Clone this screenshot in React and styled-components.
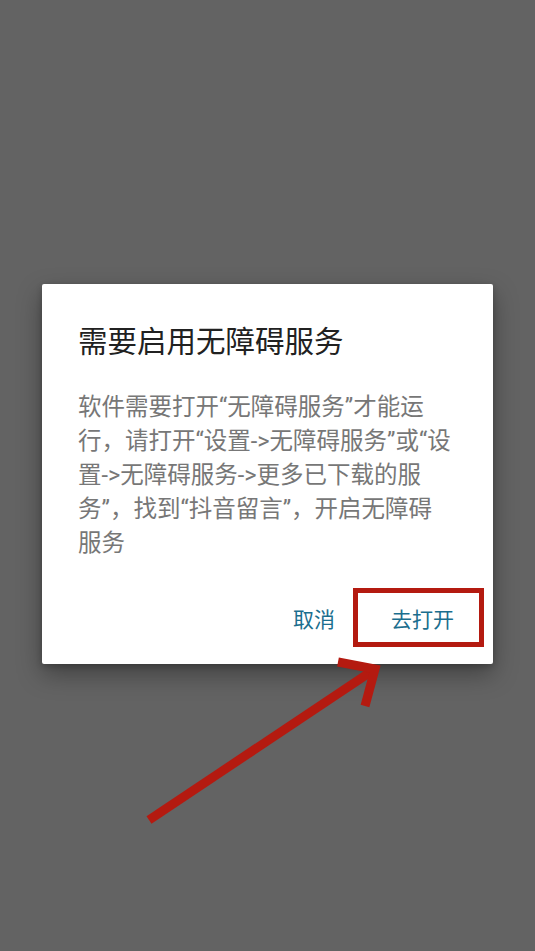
import React from "react";
import styled, { createGlobalStyle } from "styled-components";

const Global = createGlobalStyle`
  html, body { margin: 0; padding: 0; }
  body {
    background: #636363;
    font-family: Roboto, "Noto Sans CJK SC", sans-serif;
  }
`;

const Screen = styled.div`
  position: relative;
  width: 535px;
  height: 951px;
  background: #636363;
  overflow: hidden;
  padding-top: 284px;
  padding-left: 42px;
  box-sizing: border-box;
`;

const Dialog = styled.div`
  width: 451px;
  box-sizing: border-box;
  background: #ffffff;
  border-radius: 2px;
  box-shadow: 0 10px 24px rgba(0, 0, 0, 0.35), 0 2px 6px rgba(0, 0, 0, 0.2);
  padding: 40px 9px 17px 36px;
  display: flex;
  flex-direction: column;
`;

const Title = styled.h2`
  margin: 0;
  font-family: Roboto, "Noto Sans CJK SC", sans-serif;
  font-size: 29.5px;
  line-height: 36px;
  font-weight: 400;
  color: #212121;
`;

const Message = styled.p`
  margin: 30px 0 0 0;
  width: 376px;
  font-family: Roboto, "Noto Sans CJK SC", sans-serif;
  font-size: 23.5px;
  line-height: 34px;
  color: #777777;
`;

const Actions = styled.div`
  margin-top: 28px;
  display: flex;
  justify-content: flex-end;
  align-items: center;
  gap: 6px;
`;

const ActionButton = styled.button`
  appearance: none;
  background: transparent;
  font-family: Roboto, "Noto Sans CJK SC", sans-serif;
  font-size: 21px;
  color: #1b6e8e;
  cursor: pointer;
  box-sizing: border-box;
  height: 59px;
  padding: ${(p) => (p.$highlighted ? "0 0 0 8px" : "0 12px")};
  width: ${(p) => (p.$highlighted ? "131px" : "auto")};
  border: ${(p) => (p.$highlighted ? "5px solid #b41a10" : "none")};
`;

const Arrow = styled.svg`
  position: absolute;
  left: 0;
  top: 0;
  pointer-events: none;
`;

export default function App() {
  return (
    <>
      <Global />
      <Screen>
        <Dialog>
          <Title>需要启用无障碍服务</Title>
          <Message>
            软件需要打开“无障碍服务”才能运行，请打开“设置-&gt;无障碍服务”或“设置-&gt;无障碍服务-&gt;更多已下载的服务”，找到“抖音留言”，开启无障碍服务
          </Message>
          <Actions>
            <ActionButton>取消</ActionButton>
            <ActionButton $highlighted>去打开</ActionButton>
          </Actions>
        </Dialog>
        <Arrow width="535" height="951" viewBox="0 0 535 951">
          <line x1="149" y1="820" x2="372" y2="671" stroke="#b41a10" strokeWidth="9" />
          <polyline
            points="338,662 375,669 365,706"
            fill="none"
            stroke="#b41a10"
            strokeWidth="9"
            strokeLinejoin="miter"
          />
        </Arrow>
      </Screen>
    </>
  );
}
